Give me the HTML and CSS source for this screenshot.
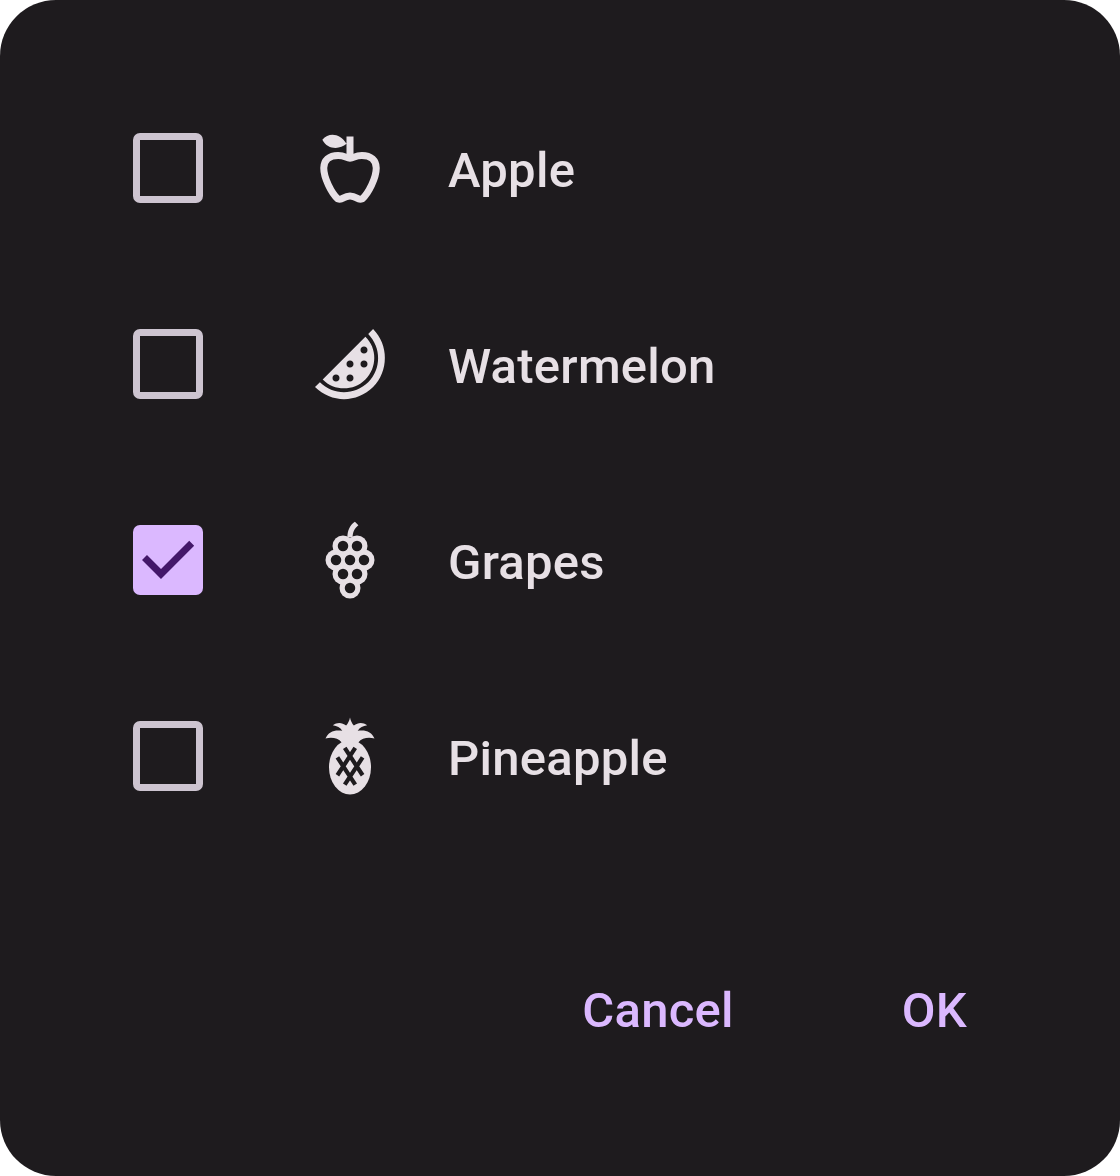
FILE: index.html
```html
<!DOCTYPE html>
<html lang="en">
<head>
<meta charset="utf-8">
<title>Choose fruit</title>
<link rel="stylesheet" href="styles.css">
</head>
<body>
<form class="dialog">
  <div class="options">
    <label class="option">
      <span class="checkbox"></span>
      <svg class="icon" viewBox="0 0 24 24">
        <path d="M4.1 3.9C6 1.7 9.2 2.1 11 5.1C9 6.8 5.6 6.8 4.1 3.9ZM11 3h2v6.5h-2z"/>
        <path class="line" d="M12 9.2C10.9 9.2 10.6 8.4 8.6 8.4C6 8.4 4.5 9.9 4.5 12C4.5 14.8 6.7 19.2 8.5 20.8C9.9 21.4 10 20 12 20C14 20 14.1 21.4 15.5 20.8C17.3 19.2 19.5 14.8 19.5 12C19.5 9.9 18 8.4 15.4 8.4C13.4 8.4 13.1 9.2 12 9.2Z"/>
      </svg>
      <span class="name">Apple</span>
    </label>
    <label class="option">
      <span class="checkbox"></span>
      <svg class="icon" viewBox="0 0 24 24">
        <path d="M16.4 16.4C19.8 13 19.8 7.5 16.4 4.2L4.2 16.4C7.5 19.8 13 19.8 16.4 16.4M16 7C16.6 7 17 7.4 17 8C17 8.6 16.6 9 16 9S15 8.6 15 8C15 7.4 15.4 7 16 7M16 11C16.6 11 17 11.4 17 12C17 12.6 16.6 13 16 13S15 12.6 15 12C15 11.4 15.4 11 16 11M12 11C12.6 11 13 11.4 13 12C13 12.6 12.6 13 12 13S11 12.6 11 12C11 11.4 11.4 11 12 11M12 17C11.4 17 11 16.6 11 16C11 15.4 11.4 15 12 15S13 15.4 13 16C13 16.6 12.6 17 12 17M8 17C7.4 17 7 16.6 7 16C7 15.4 7.4 15 8 15S9 15.4 9 16C9 16.6 8.6 17 8 17M18.6 18.6C14 23.2 6.6 23.2 2 18.6L3.4 17.2C7.2 21 13.3 21 17.2 17.2C21 13.4 21 7.3 17.2 3.4L18.6 2C23.1 6.6 23.1 14 18.6 18.6Z"/>
      </svg>
      <span class="name">Watermelon</span>
    </label>
    <label class="option">
      <span class="checkbox checked">
        <svg class="tick" viewBox="0 0 70 70"><path d="M11.5 32.5L28 49L58.7 18.3"/></svg>
      </span>
      <svg class="icon" viewBox="0 0 24 24">
        <path d="M11.25 5.6C11.25 3.6 12 2 13.4 1.1L14.4 2.1C13.3 3 12.75 4 12.75 5.6Z"/>
        <circle cx="10" cy="8" r="3"/><circle cx="14" cy="8" r="3"/>
        <circle cx="8" cy="12" r="3"/><circle cx="12" cy="12" r="3"/><circle cx="16" cy="12" r="3"/>
        <circle cx="10" cy="16" r="3"/><circle cx="14" cy="16" r="3"/>
        <circle cx="12" cy="20" r="3"/>
        <g class="holes">
          <circle cx="10" cy="8" r="1.5"/><circle cx="14" cy="8" r="1.5"/>
          <circle cx="8" cy="12" r="1.5"/><circle cx="12" cy="12" r="1.5"/><circle cx="16" cy="12" r="1.5"/>
          <circle cx="10" cy="16" r="1.5"/><circle cx="14" cy="16" r="1.5"/>
          <circle cx="12" cy="20" r="1.5"/>
        </g>
      </svg>
      <span class="name">Grapes</span>
    </label>
    <label class="option">
      <span class="checkbox"></span>
      <svg class="icon" viewBox="0 0 24 24">
        <ellipse cx="12" cy="15.2" rx="6" ry="7.8"/>
        <path d="M12 1C12.2 2 12.6 2.7 13.1 3.3C14.3 2.3 15.7 2.3 16.9 3.2C15.7 3.4 14.8 3.8 14.2 4.8C16.3 4.4 18.2 5 19 7C17.2 6.6 15.5 6.8 14.3 8.2H9.7C8.5 6.8 6.8 6.6 5 7C5.8 5 7.7 4.4 9.8 4.8C9.2 3.8 8.3 3.4 7.1 3.2C8.3 2.3 9.7 2.3 10.9 3.3C11.4 2.7 11.8 2 12 1Z"/>
        <path class="rind" d="M10.5 9.7L15.6 17.5M8.4 12.4L13.5 20.2M13.5 9.7L8.4 17.5M15.6 12.4L10.5 20.2"/>
      </svg>
      <span class="name">Pineapple</span>
    </label>
  </div>
  <div class="actions">
    <button class="action" type="button">Cancel</button>
    <button class="action" type="button">OK</button>
  </div>
</form>
</body>
</html>
```
FILE: styles.css
```css
body {
  margin: 0;
  background: #fff;
}

.dialog {
  box-sizing: border-box;
  width: 1120px;
  height: 1176px;
  padding: 70px 111px 84px 133px;
  border-radius: 56px;
  background: #1e1b1e;
  color: #e7e0e5;
  display: flex;
  flex-direction: column;
  justify-content: space-between;
  font: 500 49px/70px Roboto, sans-serif;
  letter-spacing: 0.25px;
}

.option {
  display: flex;
  align-items: center;
  height: 196px;
}

.checkbox {
  box-sizing: border-box;
  width: 70px;
  height: 70px;
  margin-right: 105px;
  border: 7px solid #cdc4d0;
  border-radius: 7px;
}

.checkbox.checked {
  border: 0;
  background: #dbb8ff;
}

.tick {
  display: block;
  fill: none;
  stroke: #431769;
  stroke-width: 7;
}

.icon {
  width: 84px;
  height: 84px;
  margin-right: 56px;
  fill: #e7e0e5;
}

.line {
  fill: none;
  stroke: #e7e0e5;
  stroke-width: 2;
}

.holes {
  fill: #1e1b1e;
}

.rind {
  fill: none;
  stroke: #1e1b1e;
  stroke-width: 1.2;
}

.name {
  padding-top: 6px;
}

.actions {
  display: flex;
  justify-content: flex-end;
  gap: 84px;
}

.action {
  height: 168px;
  padding: 6px 42px 0;
  border: 0;
  background: none;
  color: #dbb8ff;
  font: inherit;
  letter-spacing: inherit;
}
```
